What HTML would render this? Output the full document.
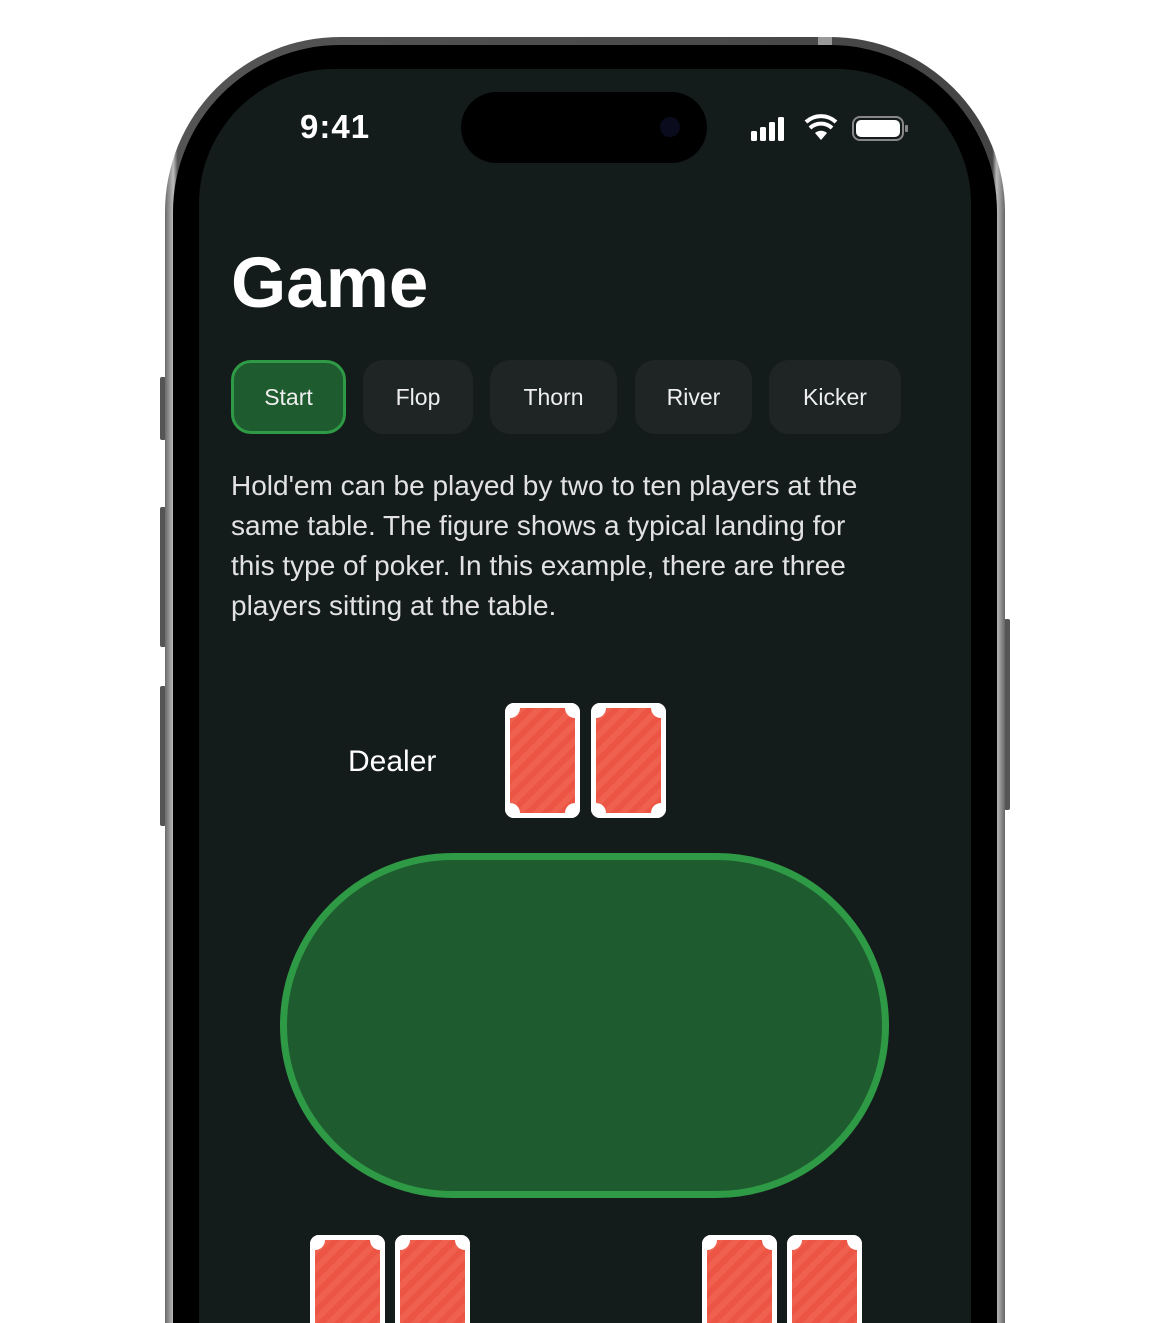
<!DOCTYPE html>
<html style="width:1170px;height:1323px;overflow:hidden"><head><style>
*{margin:0;padding:0;box-sizing:border-box}
body{width:1170px;height:1323px;background:#fff;position:relative;overflow:hidden;font-family:"Liberation Sans",sans-serif}
.abs{position:absolute}
.frame{left:165px;top:37px;width:840px;height:1286px;border-radius:175px 175px 0 0;background:linear-gradient(90deg,#6a6a6a,#bdbdbd 1%,#555 1.5%,#444 98.5%,#bbb 99%,#666);}
.black{left:173px;top:45px;width:824px;height:1278px;border-radius:167px 167px 0 0;background:#000}
.screen{left:199px;top:69px;width:772px;height:1254px;border-radius:135px 135px 0 0;background:#141c1b;overflow:hidden}
.btn{background:#555;border-radius:2px}
.island{left:461px;top:92px;width:246px;height:71px;border-radius:36px;background:#000}
.tab{position:absolute;top:360px;height:74px;border-radius:20px;background:#1e2524;color:#eee;font-size:23px;display:flex;align-items:center;justify-content:center}
.card{position:absolute;width:75px;height:115px;background:#fff;border-radius:9px;overflow:hidden}
.card .in{position:absolute;left:5px;top:5px;right:5px;bottom:5px;border-radius:2px;background:repeating-linear-gradient(135deg,#ec5443 0 6px,#f0604e 6px 12px)}
.card .c{position:absolute;width:20px;height:20px;border-radius:50%;background:#fff}
</style></head><body>
<div class="abs btn" style="left:160px;top:377px;width:6px;height:63px"></div>
<div class="abs btn" style="left:160px;top:507px;width:6px;height:140px"></div>
<div class="abs btn" style="left:160px;top:686px;width:6px;height:140px"></div>
<div class="abs btn" style="left:1004px;top:619px;width:6px;height:191px"></div>
<div class="abs frame"></div>
<div class="abs" style="left:818px;top:37px;width:14px;height:10px;background:#999"></div>
<div class="abs black"></div>
<div class="abs screen"></div>
<div class="abs island"></div>
<div class="abs" style="left:660px;top:117px;width:20px;height:20px;border-radius:50%;background:#0b0b1e"></div>
<div class="abs" style="left:300px;top:108px;color:#fff;font-size:33px;font-weight:bold;letter-spacing:1px">9:41</div>
<svg class="abs" style="left:750px;top:114px" width="160" height="30" viewBox="0 0 160 30">
<rect x="1" y="17" width="6" height="10" rx="1.5" fill="#fff"/>
<rect x="10" y="13" width="6" height="14" rx="1.5" fill="#fff"/>
<rect x="19" y="8" width="6" height="19" rx="1.5" fill="#fff"/>
<rect x="28" y="3" width="6" height="24" rx="1.5" fill="#fff"/>
<path d="M71 26 L65 19 A9 9 0 0 1 77 19 Z" fill="#fff"/>
<path d="M60 14 A16 16 0 0 1 82 14" stroke="#fff" stroke-width="4" fill="none"/>
<path d="M56 8 A22 22 0 0 1 86 8" stroke="#fff" stroke-width="4" fill="none"/>
<rect x="103" y="3" width="50" height="23" rx="7" fill="none" stroke="#888" stroke-width="2"/>
<rect x="106" y="6" width="44" height="17" rx="5" fill="#fff"/>
<rect x="155" y="11" width="3" height="7" rx="1" fill="#888"/>
</svg>
<div class="abs" style="left:231px;top:243px;color:#fff;font-size:71px;font-weight:bold">Game</div>
<div class="tab" style="left:231px;width:115px;background:#1e5c2f;border:3px solid #2f9a45">Start</div>
<div class="tab" style="left:363px;width:110px">Flop</div>
<div class="tab" style="left:490px;width:127px">Thorn</div>
<div class="tab" style="left:635px;width:117px">River</div>
<div class="tab" style="left:769px;width:132px">Kicker</div>
<div class="abs" style="left:231px;top:466px;width:720px;color:#e2e2e2;font-size:28px;line-height:40px;white-space:nowrap">Hold'em can be played by two to ten players at the<br>same table. The figure shows a typical landing for<br>this type of poker. In this example, there are three<br>players sitting at the table.</div>
<div class="abs" style="left:348px;top:745px;color:#fff;font-size:30px">Dealer</div>
<div class="abs" style="left:280px;top:853px;width:609px;height:345px;border-radius:173px;background:#1e5c2f;border:7px solid #2f9a45"></div>
<div class="card" style="left:505px;top:703px"><div class="in"></div><div class="c" style="left:-5px;top:-5px"></div><div class="c" style="right:-5px;top:-5px"></div><div class="c" style="left:-5px;bottom:-5px"></div><div class="c" style="right:-5px;bottom:-5px"></div></div>
<div class="card" style="left:591px;top:703px"><div class="in"></div><div class="c" style="left:-5px;top:-5px"></div><div class="c" style="right:-5px;top:-5px"></div><div class="c" style="left:-5px;bottom:-5px"></div><div class="c" style="right:-5px;bottom:-5px"></div></div>
<div class="card" style="left:310px;top:1235px"><div class="in"></div><div class="c" style="left:-5px;top:-5px"></div><div class="c" style="right:-5px;top:-5px"></div></div>
<div class="card" style="left:395px;top:1235px"><div class="in"></div><div class="c" style="left:-5px;top:-5px"></div><div class="c" style="right:-5px;top:-5px"></div></div>
<div class="card" style="left:702px;top:1235px"><div class="in"></div><div class="c" style="left:-5px;top:-5px"></div><div class="c" style="right:-5px;top:-5px"></div></div>
<div class="card" style="left:787px;top:1235px"><div class="in"></div><div class="c" style="left:-5px;top:-5px"></div><div class="c" style="right:-5px;top:-5px"></div></div>
</body></html>
